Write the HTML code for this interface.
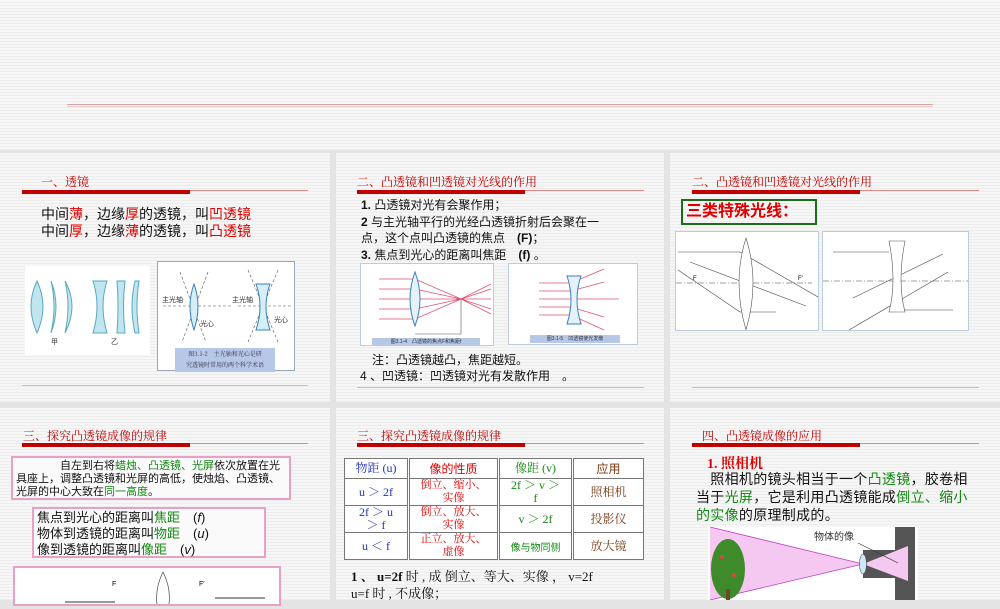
<!DOCTYPE html>
<html><head><meta charset="utf-8">
<style>
*{margin:0;padding:0;box-sizing:border-box}
body{width:1000px;height:600px;overflow:hidden;position:relative;font-family:"Liberation Sans","Noto Sans CJK SC",sans-serif;background:#e4e4e4}
.a{position:absolute}
.stripe{background:repeating-linear-gradient(#f7f7f7 0 2px,#ececec 2px 3px)}
.panel{position:absolute;background:repeating-linear-gradient(#f6f6f6 0 2px,#ededed 2px 3px)}
.hd{position:absolute;font-size:12px;color:#c00000;white-space:nowrap;font-family:"Liberation Serif","Noto Serif CJK SC",serif}
.thick{position:absolute;height:4px;background:#c00000}
.thin{position:absolute;height:1px;background:#d88}
.t{position:absolute;white-space:nowrap;color:#111}
.r{color:#e00000}.g{color:#118811}.b{color:#2233bb}.br{color:#7a3a10}
.img{position:absolute;background:#fff}
table{border-collapse:collapse}
td{border:1px solid #777;text-align:center;font-family:"Liberation Serif","Noto Serif CJK SC",serif;font-size:12px;line-height:13px;padding:0}
</style></head><body>
<div class="a stripe" style="left:0;top:0;width:1000px;height:150px"></div>
<div class="a" style="left:67px;top:104px;width:866px;height:1px;background:#d9a0a0"></div>
<div class="a" style="left:67px;top:106px;width:866px;height:1px;background:#e8d0d0"></div>

<div class="panel" style="left:0;top:153px;width:330px;height:249px"></div>
<div class="panel" style="left:336px;top:153px;width:328px;height:249px"></div>
<div class="panel" style="left:670px;top:153px;width:330px;height:249px"></div>
<div class="panel" style="left:0;top:408px;width:330px;height:192px"></div>
<div class="panel" style="left:336px;top:408px;width:328px;height:192px"></div>
<div class="panel" style="left:670px;top:408px;width:330px;height:192px"></div>

<!-- P1 -->
<div class="hd" style="left:41px;top:173px">一、透镜</div>
<div class="thick" style="left:22px;top:190px;width:168px"></div>
<div class="thin" style="left:190px;top:190px;width:118px"></div>
<div class="t" style="left:41px;top:206px;font-size:14px;line-height:17px">中间<span class="r">薄</span>，边缘<span class="r">厚</span>的透镜，叫<span class="r">凹透镜</span><br>中间<span class="r">厚</span>，边缘<span class="r">薄</span>的透镜，叫<span class="r">凸透镜</span></div>
<div class="img" style="left:25px;top:266px;width:125px;height:89px">
<svg width="125" height="89"><g fill="#bfe6ee" stroke="#5aa8c0" stroke-width="1">
<path d="M12 15 Q0 40 12 67 Q24 40 12 15Z"/><path d="M26 15 Q36 40 26 67 Q32 40 26 15Z"/><path d="M40 15 Q54 40 40 67 Q46 40 40 15Z"/>
<path d="M68 15 L82 15 Q74 40 82 67 L68 67 Q76 40 68 15Z"/><path d="M92 15 L100 15 Q97 40 100 67 L92 67 Q94 40 92 15Z"/><path d="M110 15 Q104 40 110 67 L114 67 Q110 40 114 15Z"/></g>
<text x="26" y="78" font-size="7" fill="#333">甲</text><text x="86" y="78" font-size="7" fill="#333">乙</text></svg></div>
<div class="img" style="left:157px;top:261px;width:138px;height:110px;border:1px solid #9ab">
<svg width="136" height="108"><g stroke="#555" stroke-width=".6" fill="none" stroke-dasharray="3 2"><path d="M5 44H75M80 44H135"/><path d="M22 10L48 80M50 10L24 80M90 8L120 80M120 8L90 80"/></g>
<path d="M36 22Q28 44 36 68Q44 44 36 22Z" fill="#d6eef6" stroke="#3a7fc0"/><path d="M98 22H112Q104 44 112 68H98Q106 44 98 22Z" fill="#d6eef6" stroke="#3a7fc0"/>
<text x="4" y="40" font-size="7" fill="#333">主光轴</text><text x="74" y="40" font-size="7" fill="#333">主光轴</text><text x="42" y="64" font-size="7" fill="#333">光心</text><text x="116" y="60" font-size="7" fill="#333">光心</text></svg></div>
<div class="a" style="left:175px;top:348px;width:100px;height:24px;background:#b7c7e6;font-size:6px;line-height:11px;color:#334;text-align:center;font-family:'Noto Serif CJK SC',serif">图3.1-2　主光轴和光心是研<br>究透镜时常用的两个科学术语</div>
<div class="thin" style="left:22px;top:385px;width:286px;opacity:.6"></div>

<!-- P2 -->
<div class="hd" style="left:357px;top:173px">二、凸透镜和凹透镜对光线的作用</div>
<div class="thick" style="left:357px;top:190px;width:168px"></div>
<div class="thin" style="left:525px;top:190px;width:119px"></div>
<div class="t" style="left:361px;top:197px;font-size:12px;line-height:16.5px"><b>1.</b> 凸透镜对光有会聚作用；<br><b>2</b> 与主光轴平行的光经凸透镜折射后会聚在一<br>点，这个点叫凸透镜的焦点　<b>(F)</b>；<br><b>3.</b> 焦点到光心的距离叫焦距　<b>(f)</b> 。</div>
<div class="img" style="left:360px;top:263px;width:134px;height:83px;border:1px solid #bcd">
<svg width="132" height="81"><g stroke="#e05070" stroke-width=".7" fill="none"><path d="M18 15H54L100 35M18 25H54L100 35M18 35H130M18 45H54L100 35M18 55H54L100 35M100 35L130 25M100 35L130 45M100 35L130 20M100 35L130 50"/></g>
<path d="M54 8Q44 35 54 62Q64 35 54 8Z" fill="#e6f2fa" stroke="#3a7fc0"/><path d="M54 70H100M100 35V70" stroke="#555" stroke-width=".6" fill="none"/></svg></div>
<div class="a" style="left:372px;top:338px;width:108px;height:8px;background:#b7c7e6;font-size:5px;line-height:8px;color:#334;text-align:center">图3.1-4　凸透镜的焦点F和焦距f</div>
<div class="img" style="left:508px;top:263px;width:130px;height:82px;border:1px solid #bcd">
<svg width="128" height="80"><g stroke="#e05070" stroke-width=".7" fill="none"><path d="M30 19H62L95 5M30 27H62L95 18M30 35H110M30 43H62L95 53M30 51H62L95 66"/></g>
<path d="M58 12H72Q64 35 72 60H58Q66 35 58 12Z" fill="#e6f2fa" stroke="#3a7fc0"/></svg></div>
<div class="a" style="left:530px;top:335px;width:90px;height:8px;background:#b7c7e6;font-size:5px;line-height:8px;color:#334;text-align:center">图3.1-5　凹透镜使光发散</div>
<div class="t" style="left:360px;top:352px;font-size:12px;line-height:16px">　注：凸透镜越凸，焦距越短。<br>4 、凹透镜：凹透镜对光有发散作用　。</div>
<div class="thin" style="left:357px;top:387px;width:287px;opacity:.6"></div>

<!-- P3 -->
<div class="hd" style="left:692px;top:173px">二、凸透镜和凹透镜对光线的作用</div>
<div class="thick" style="left:692px;top:190px;width:168px"></div>
<div class="thin" style="left:860px;top:190px;width:119px"></div>
<div class="a" style="left:681px;top:199px;width:136px;height:26px;border:2px solid #1a6e1a;color:#e00000;font-size:16px;line-height:22px;padding-left:3px;font-weight:bold">三类特殊光线：</div>
<div class="img" style="left:675px;top:231px;width:144px;height:100px;border:1px solid #bcd">
<svg width="142" height="98"><g stroke="#444" stroke-width=".6" fill="none"><path d="M0 51H136" stroke-dasharray="6 2 1 2"/><path d="M2 20H64L142 65M14 30L130 74M2 38L64 80H100"/></g><path d="M70 6Q56 50 70 98Q84 50 70 6Z" fill="#fff" stroke="#555" stroke-width=".6"/><text x="17" y="48" font-size="6">F</text><text x="122" y="48" font-size="6">F′</text></svg></div>
<div class="img" style="left:822px;top:231px;width:147px;height:100px;border:1px solid #bcd">
<svg width="145" height="98"><g stroke="#444" stroke-width=".6" fill="none"><path d="M0 49H145" stroke-dasharray="6 2 1 2"/><path d="M10 20H66M30 66L120 22M26 98L125 40M80 78H130"/></g><path d="M66 9H82Q74 50 82 80H66Q74 50 66 9Z" fill="#fff" stroke="#555" stroke-width=".6"/></svg></div>
<div class="thin" style="left:692px;top:387px;width:287px;opacity:.6"></div>

<!-- Row2 P1 -->
<div class="hd" style="left:23px;top:427px">三、探究凸透镜成像的规律</div>
<div class="thick" style="left:22px;top:443px;width:168px"></div>
<div class="thin" style="left:190px;top:443px;width:118px"></div>
<div class="a" style="left:11px;top:456px;width:280px;height:44px;border:2px solid #e8a0c8;background:#fafafa;font-size:11px;line-height:13px;padding:2px 3px;color:#111;white-space:nowrap">　　　　自左到右将<span class="g">蜡烛、凸透镜、光屏</span>依次放置在光<br>具座上，调整凸透镜和光屏的高低，使烛焰、凸透镜、<br>光屏的中心大致在<span class="g">同一高度</span>。</div>
<div class="a" style="left:32px;top:507px;width:234px;height:51px;border:2px solid #e8a0c8;background:#fafafa;font-size:13px;line-height:16px;padding:1px 3px;color:#111">焦点到光心的距离叫<span class="g">焦距</span>　(<i>f</i>)<br>物体到透镜的距离叫<span class="g">物距</span>　(<i>u</i>)<br>像到透镜的距离叫<span class="g">像距</span>　(<i>v</i>)</div>
<div class="a" style="left:13px;top:566px;width:268px;height:40px;border:2px solid #e8a0c8;background:#fff">
<svg width="264" height="36"><path d="M148 4Q140 20 142 36M148 4Q156 20 154 36" stroke="#444" fill="none" stroke-width=".7"/><text x="97" y="18" font-size="7">F</text><text x="184" y="18" font-size="7">F′</text><path d="M50 34H100M200 30H250" stroke="#333" fill="none"/></svg></div>

<!-- Row2 P2 -->
<div class="hd" style="left:357px;top:427px">三、探究凸透镜成像的规律</div>
<div class="thick" style="left:357px;top:443px;width:168px"></div>
<div class="thin" style="left:525px;top:443px;width:119px"></div>
<table class="a" style="left:344px;top:458px;width:300px;background:#fff">
<tr style="height:20px"><td class="b" style="width:64px;border-right:3px double #777">物距 (u)</td><td class="r" style="width:90px;border-right:3px double #777;font-family:'Noto Sans CJK SC',sans-serif">像的性质</td><td class="g" style="width:74px;border-right:3px double #777">像距 (v)</td><td class="br" style="font-family:'Noto Sans CJK SC',sans-serif">应用</td></tr>
<tr style="height:27px"><td class="b" style="border-right:3px double #777">u ＞ 2f</td><td class="r" style="border-right:3px double #777;font-size:11px">倒立、缩小、<br>实像</td><td class="g" style="border-right:3px double #777">2f ＞ v ＞<br>f</td><td class="br">照相机</td></tr>
<tr style="height:26px"><td class="b" style="border-right:3px double #777">2f ＞ u<br>＞ f</td><td class="r" style="border-right:3px double #777;font-size:11px">倒立、放大、<br>实像</td><td class="g" style="border-right:3px double #777">v ＞ 2f</td><td class="br">投影仪</td></tr>
<tr style="height:26px"><td class="b" style="border-right:3px double #777">u ＜ f</td><td class="r" style="border-right:3px double #777;font-size:11px">正立、放大、<br>虚像</td><td class="g" style="border-right:3px double #777;font-size:10px;font-family:'Noto Sans CJK SC',sans-serif">像与物同侧</td><td class="br">放大镜</td></tr>
</table>
<div class="t" style="left:351px;top:568px;font-size:13px;line-height:17px;font-family:'Liberation Serif','Noto Serif CJK SC',serif"><b>1 、 u=2f</b> 时 , 成 倒立、等大、实像 ， v=2f<br>u=f 时 , 不成像；</div>

<!-- Row2 P3 -->
<div class="hd" style="left:702px;top:427px">四、凸透镜成像的应用</div>
<div class="thick" style="left:692px;top:443px;width:168px"></div>
<div class="thin" style="left:860px;top:443px;width:119px"></div>
<div class="t r" style="left:707px;top:453px;font-size:14px;font-weight:bold;font-family:'Liberation Serif','Noto Serif CJK SC',serif">1. 照相机</div>
<div class="t" style="left:696px;top:470px;font-size:14px;line-height:18px;letter-spacing:.3px">　照相机的镜头相当于一个<span class="g">凸透镜</span>，胶卷相<br>当于<span class="g">光屏</span>，它是利用凸透镜能成<span class="g">倒立、缩小</span><br><span class="g">的实像</span>的原理制成的。</div>
<div class="img" style="left:708px;top:527px;width:210px;height:73px">
<svg width="210" height="73"><path d="M2 0L155 37L2 73Z" fill="#f4c8f0"/><path d="M2 0L155 37M2 73L155 37" stroke="#c040c0" stroke-width=".8" fill="none"/>
<ellipse cx="20" cy="42" rx="17" ry="30" fill="#3f8a2a"/><circle cx="14" cy="30" r="2" fill="#d44"/><circle cx="26" cy="48" r="2" fill="#d44"/><rect x="18" y="62" width="4" height="11" fill="#6b4a2a"/>
<path d="M187 0H207V73H187V51H155V23H187Z" fill="#555"/><path d="M155 37L200 19V54Z" fill="#f4c8f0"/><ellipse cx="155" cy="37" rx="3.5" ry="10" fill="#cfe8f6" stroke="#333" stroke-width=".5"/>
<text x="106" y="13" font-size="10" fill="#333" font-family="Noto Sans CJK SC">物体的像</text><path d="M150 16L190 36" stroke="#333" stroke-width=".6" fill="none"/></svg></div>
</body></html>
